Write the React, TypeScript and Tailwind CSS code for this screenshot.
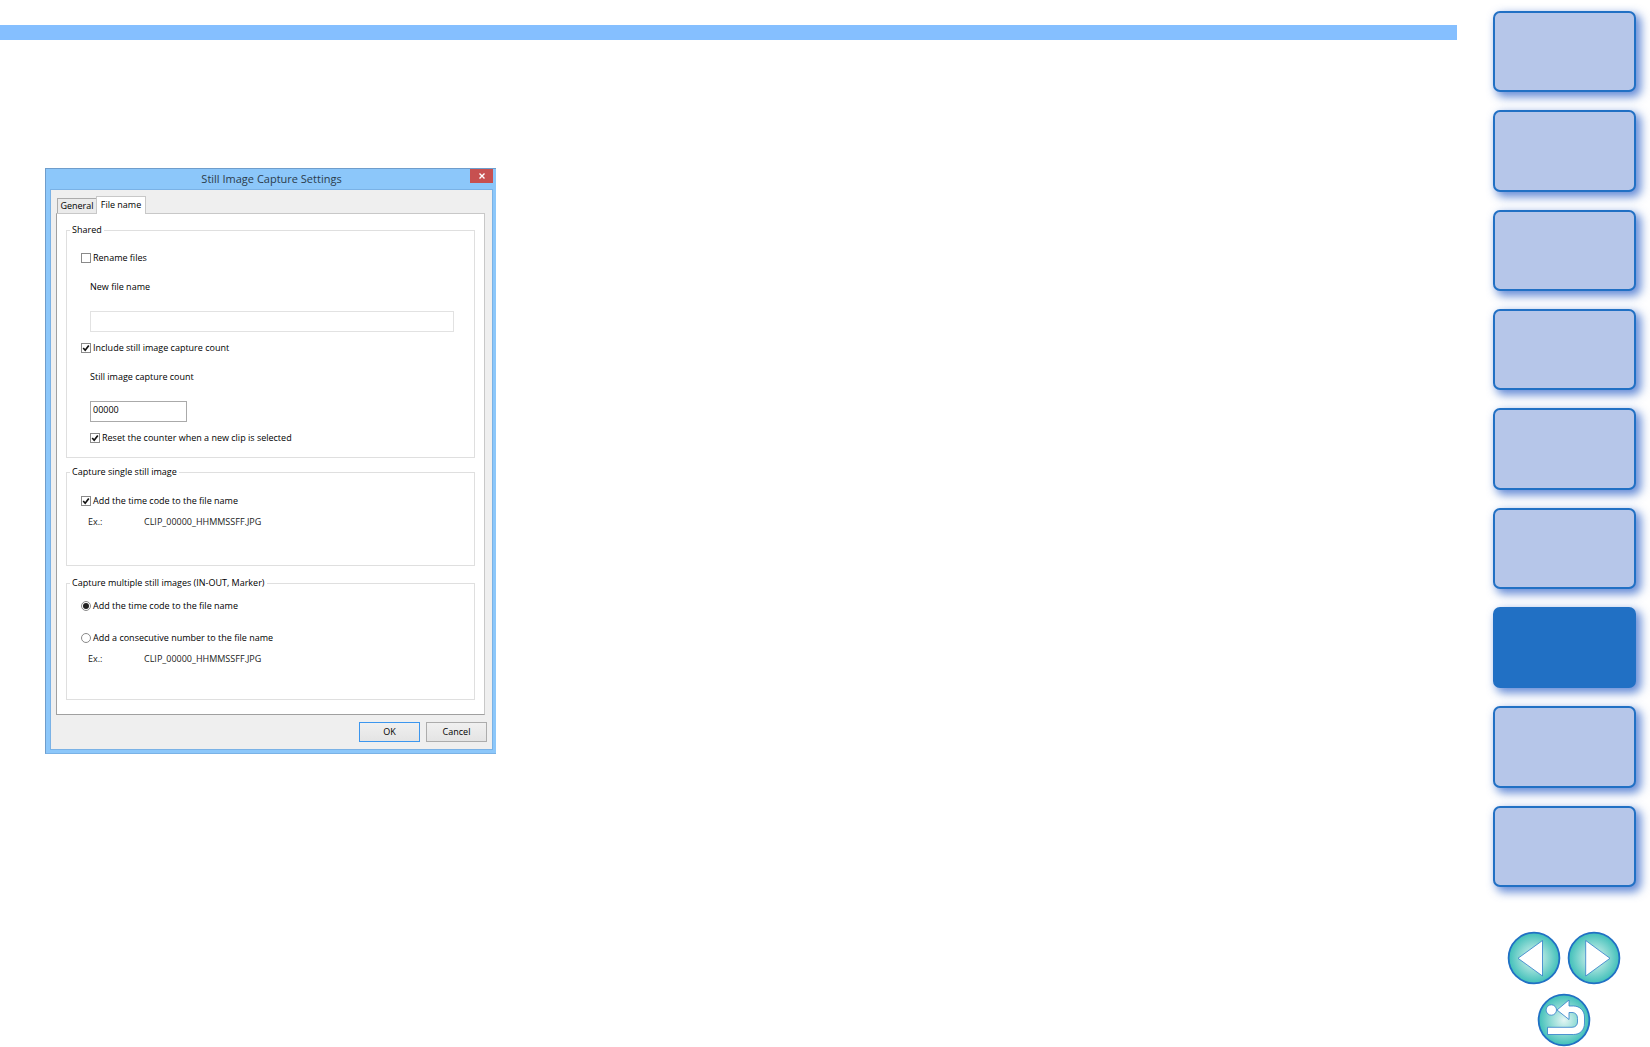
import React, { useState } from "react";

function Tick({
  type = "checkbox",
  name,
  defaultChecked,
  indent = "ml-[14px]",
  mt,
  children,
}: {
  type?: "checkbox" | "radio";
  name?: string;
  defaultChecked?: boolean;
  indent?: string;
  mt: string;
  children: React.ReactNode;
}) {
  return (
    <label className={`flex h-[14px] w-fit items-center gap-[2px] ${indent} ${mt}`}>
      <span className="grid size-[10px] place-items-center">
        <input
          type={type}
          name={name}
          defaultChecked={defaultChecked}
          className={`peer col-start-1 row-start-1 size-[10px] appearance-none border border-[#8a8a8a] bg-white ${
            type === "radio" ? "rounded-full" : ""
          }`}
        />
        {type === "radio" ? (
          <span className="pointer-events-none col-start-1 row-start-1 hidden size-[6px] rounded-full bg-[#222] peer-checked:block" />
        ) : (
          <svg
            viewBox="0 0 8 8"
            className="pointer-events-none col-start-1 row-start-1 hidden size-2 peer-checked:block"
            fill="none"
            stroke="#111"
            strokeWidth="1.7"
          >
            <path d="M1.2 4 3.2 6.2 6.8 1.6" />
          </svg>
        )}
      </span>
      <span>{children}</span>
    </label>
  );
}

function Group({ title, className, children }: { title: string; className: string; children: React.ReactNode }) {
  return (
    <fieldset className={`min-w-0 border border-[#dfdfdf] ${className}`}>
      <legend className="ml-[3px] px-[2px]">{title}</legend>
      {children}
    </fieldset>
  );
}

function Example() {
  return (
    <p className="mt-[7px] ml-[21px] flex text-[#222]">
      <span className="w-[56px]">Ex.:</span>
      <span>CLIP_00000_HHMMSSFF.JPG</span>
    </p>
  );
}

function Dialog() {
  return (
    <section
      role="dialog"
      aria-labelledby="dialog-title"
      className="mt-[128px] ml-[45px] w-full max-w-[451px] border-t border-l border-[#6f9dcb] border-b border-b-[#7ab2e6] bg-[#8cc7fa] pr-[3px] pb-[3px] pl-[4px] text-[9px] leading-[14px] text-black"
    >
      <header className="grid h-[20px] grid-cols-[23px_1fr_23px]">
        <h1 id="dialog-title" className="col-start-2 text-center text-[11px] leading-[20px] text-[#2b3c4c]">
          Still Image Capture Settings
        </h1>
        <button aria-label="Close" className="grid h-[14px] place-items-center bg-[#c75050]">
          <svg viewBox="0 0 8 8" className="size-2" stroke="#fff" strokeWidth="1.4">
            <path d="M1.5 1.5 6.5 6.5M6.5 1.5 1.5 6.5" />
          </svg>
        </button>
      </header>
      <div className="border border-[#7ab2e6] bg-[#efefef] pt-[6px] pb-[7px] pl-[5px]">
        <div role="tablist" className="ml-px flex items-end">
          <button role="tab" aria-selected="false" className="h-[15px] w-[39px] border border-r-0 border-b-0 border-[#acacac] bg-[#ebebeb]">
            General
          </button>
          <button role="tab" aria-selected="true" className="-mb-px h-[18px] w-[50px] border border-b-0 border-[#c8c8c8] bg-white pb-[2px]">
            File name
          </button>
        </div>
        <div role="tabpanel" className="mr-[7px] border border-[#c8c8c8] border-b-[#a0a0a0] border-l-[#a0a0a0] bg-white px-[9px] pt-[9px] pb-[14px]">
          <Group title="Shared" className="pb-[12px]">
            <Tick mt="mt-[14px]">Rename files</Tick>
            <label htmlFor="new-name" className="mt-[15px] ml-[23px] block w-fit">
              New file name
            </label>
            <div className="mt-[17px] mr-[20px] ml-[23px] flex">
              <input id="new-name" className="h-[21px] w-full border border-[#e2e2e2] bg-white px-[2px]" />
            </div>
            <Tick mt="mt-[9px]" defaultChecked>
              Include still image capture count
            </Tick>
            <label htmlFor="count" className="mt-[15px] ml-[23px] block w-fit">
              Still image capture count
            </label>
            <div className="mt-[17px] ml-[23px] flex">
              <input id="count" defaultValue="00000" className="h-[21px] w-[97px] border border-[#aaaaaa] bg-white px-[2px] pb-[4px]" />
            </div>
            <Tick mt="mt-[9px]" indent="ml-[23px]" defaultChecked>
              Reset the counter when a new clip is selected
            </Tick>
          </Group>
          <Group title="Capture single still image" className="mt-[7px] pb-[36px]">
            <Tick mt="mt-[15px]" defaultChecked>
              Add the time code to the file name
            </Tick>
            <Example />
          </Group>
          <Group title="Capture multiple still images (IN-OUT, Marker)" className="mt-[10px] pb-[33px]">
            <Tick type="radio" name="multi" mt="mt-[9px]" defaultChecked>
              Add the time code to the file name
            </Tick>
            <Tick type="radio" name="multi" mt="mt-[18px]">
              Add a consecutive number to the file name
            </Tick>
            <Example />
          </Group>
        </div>
        <div className="mt-[7px] mr-[5px] flex justify-end gap-[6px]">
          <button className="h-[20px] w-[61px] border border-[#3c96ee] bg-linear-to-b from-[#f0f0f0] to-[#e4e4e4]">OK</button>
          <button className="h-[20px] w-[61px] border border-[#acacac] bg-linear-to-b from-[#f0f0f0] to-[#e4e4e4]">Cancel</button>
        </div>
      </div>
    </section>
  );
}

function RoundButton({ id, label, children }: { id: string; label: string; children: React.ReactNode }) {
  return (
    <button aria-label={label} className="size-[54px]">
      <svg viewBox="0 0 54 54" className="size-full">
        <defs>
          <radialGradient id={id}>
            <stop offset="0" stopColor="#e4f6f4" />
            <stop offset="0.5" stopColor="#93dcd6" />
            <stop offset="1" stopColor="#3fbfb9" />
          </radialGradient>
        </defs>
        <circle cx="27" cy="27" r="25.4" fill={`url(#${id})`} stroke="#2170c4" strokeWidth="1.8" />
        <g fill="#fff" stroke="#2f7cc9" strokeWidth="0.8">
          {children}
        </g>
      </svg>
    </button>
  );
}

export default function App() {
  const [active, setActive] = useState(6);
  return (
    <div className="flex min-h-screen bg-white font-['Open_Sans','Noto_Sans',sans-serif]">
      <main className="min-w-0 flex-1 pt-[25px]">
        <div className="h-[15px] bg-[#85bfff]" />
        <Dialog />
      </main>
      <aside className="w-[193px] shrink-0 pt-[11px] pr-[14px] pl-[36px]">
        <nav aria-label="Chapters" className="grid h-[876px] grid-rows-9 gap-[18px]">
          {Array.from({ length: 9 }, (_, i) => (
            <button
              key={i}
              aria-label={`Chapter ${i + 1}`}
              aria-pressed={i === active}
              onClick={() => setActive(i)}
              className={`rounded-[7px] border-2 border-[#2170c4] shadow-[4px_4px_10px_1px_rgba(50,100,200,0.75)] ${
                i === active ? "bg-[#2170c4]" : "bg-[#b6c6e9]"
              }`}
            />
          ))}
        </nav>
        <div className="mt-[44px] mr-[2px] flex flex-wrap justify-center gap-x-[6px] gap-y-[8px]">
          <RoundButton id="g-prev" label="Previous page">
            <path d="M11 27.3 35.5 9.5V45Z" />
          </RoundButton>
          <RoundButton id="g-next" label="Next page">
            <path d="M43 27.3 18.7 9.5V45Z" />
          </RoundButton>
          <RoundButton id="g-back" label="Go back">
            <path d="M20 17 32 7V13H36.5C43 13 47.5 18 47.5 24V30C47.5 37 43 41.5 36.5 41.5H10.5V34.3H35C38.5 34.3 40.5 32 40.5 29V25.5C40.5 22 38.5 19.5 35 19.5H32V26.5Z" />
            <circle cx="14.3" cy="17" r="5.2" />
          </RoundButton>
        </div>
      </aside>
    </div>
  );
}
